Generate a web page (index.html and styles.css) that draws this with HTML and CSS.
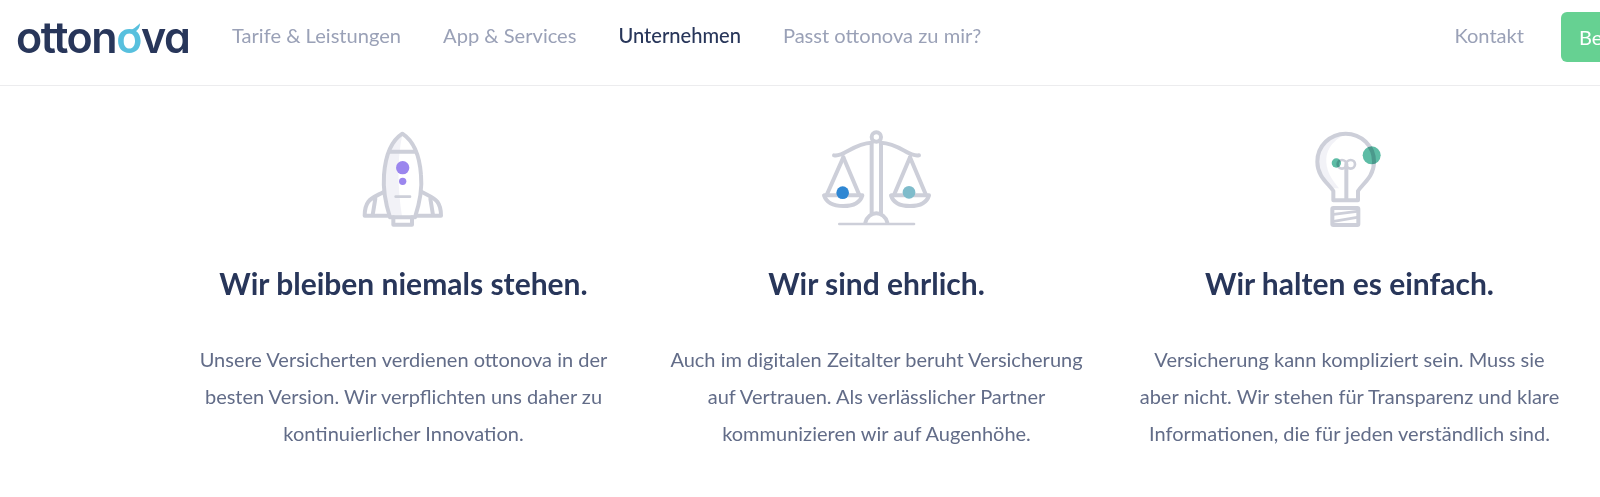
FILE: index.html
```html
<!DOCTYPE html>
<html lang="de">
<head>
  <meta charset="UTF-8">
  <meta name="viewport" content="width=device-width, initial-scale=1.0">
  <title>ottonova</title>
  <link rel="stylesheet" href="styles.css">
</head>
<body>
  <header class="site-header">
    <a href="#" class="logo">otton<span class="logo-o">o<svg class="logo-drop" viewBox="0 0 14 10"><path d="M1 9 C5 8 9 5 13 1 C13 5 11 8 8 10 Z"/></svg></span>va</a>
    <nav class="main-nav">
      <a href="#" class="nav-link">Tarife &amp; Leistungen</a>
      <a href="#" class="nav-link">App &amp; Services</a>
      <a href="#" class="nav-link active">Unternehmen</a>
      <a href="#" class="nav-link">Passt ottonova zu mir?</a>
    </nav>
    <div class="header-actions">
      <a href="#" class="nav-link">Kontakt</a>
      <a href="#" class="btn-join">Beitreten</a>
    </div>
  </header>

  <main class="values">
    <section class="value">
      <svg class="value-icon" viewBox="-3 0 390 345">
        <path class="shade" d="M187 45 C155 66 138 110 134 165 C130 205 138 255 150 288 H186 C172 200 172 110 187 45 Z"/>
        <g class="line">
          <path d="M187 41 C150 65 136 110 132 165 C129 205 138 255 150 292 H225 C237 255 247 205 243 165 C239 110 224 65 187 41 Z"/>
          <path d="M148 95 H227"/>
          <path d="M132 215 C115 225 95 232 85 245 C75 258 74 272 74 287 H148"/>
          <path d="M244 215 C262 225 282 232 292 245 C302 258 303 272 303 287 H228"/>
          <path d="M106 236 L98 285"/>
          <path d="M271 236 L279 285"/>
          <path d="M160 292 V314 H216 V292"/>
          <path class="thin" d="M167 230 H210"/>
        </g>
        <circle class="dot-purple" cx="188" cy="143" r="20"/>
        <circle class="dot-purple" cx="188" cy="184" r="11"/>
      </svg>
      <h2 class="value-title">Wir bleiben niemals stehen.</h2>
      <p class="value-text">Unsere Versicherten verdienen ottonova in der besten Version. Wir verpflichten uns daher zu kontinuierlicher Innovation.</p>
    </section>

    <section class="value">
      <svg class="value-icon" viewBox="6 0 390 345">
        <g class="line">
          <circle cx="199" cy="51" r="14"/>
          <path d="M185 68 V283"/>
          <path d="M213 68 V283"/>
          <path d="M72 106 C100 112 130 70 185 68 M213 68 C268 70 298 112 327 106"/>
          <path d="M100 112 L50 225"/>
          <path d="M100 112 L148 225"/>
          <path d="M300 112 L252 225"/>
          <path d="M300 112 L348 225"/>
          <path d="M42 226 H157 C150 250 125 258 100 258 C75 258 50 250 42 226 Z"/>
          <path d="M243 226 H357 C350 250 325 258 300 258 C275 258 250 250 243 226 Z"/>
          <path d="M166 308 C170 290 185 280 199 280 C213 280 228 290 232 308"/>
          <path class="thin" d="M88 312 H312"/>
        </g>
        <circle class="dot-blue" cx="98" cy="218" r="19"/>
        <circle class="dot-sky" cx="297" cy="217" r="19"/>
      </svg>
      <h2 class="value-title">Wir sind ehrlich.</h2>
      <p class="value-text">Auch im digitalen Zeitalter beruht Versicherung auf Vertrauen. Als verlässlicher Partner kommunizieren wir auf Augenhöhe.</p>
    </section>

    <section class="value">
      <svg class="value-icon" viewBox="-12 0 390 345">
        <path class="shade" d="M165 44 C115 48 88 85 88 125 C88 155 110 180 133 205 H150 C125 175 110 150 112 115 C114 85 135 60 165 44 Z"/>
        <g class="line">
          <path d="M133 241 V213 C118 190 85 170 85 125 C85 78 123 41 170 41 C217 41 255 78 255 125 C255 170 222 190 207 213 V241 Z"/>
          <path d="M172 240 V132"/>
          <circle class="thin" cx="159" cy="133" r="13"/>
          <circle class="thin" cx="185" cy="133" r="13"/>
          <rect x="130" y="264" width="78" height="51" rx="3"/>
          <path class="thin" d="M134 283 L204 274"/>
          <path class="thin" d="M134 304 L204 292"/>
        </g>
        <circle class="dot-teal" cx="248" cy="106" r="27"/>
        <circle class="dot-teal" cx="142" cy="129" r="14"/>
      </svg>
      <h2 class="value-title">Wir halten es einfach.</h2>
      <p class="value-text">Versicherung kann kompliziert sein. Muss sie<br>aber nicht. Wir stehen für Transparenz und klare Informationen, die für jeden verständlich sind.</p>
    </section>
  </main>
</body>
</html>
```

FILE: styles.css
```css
:root {
  --navy: #28365a;
  --nav-grey: #9aa1b7;
  --text-grey: #626c88;
  --icon-grey: #cdcfd9;
  --green: #66d192;
  --sky: #58c0de;
  --border-color: #ececee;
}

html, body {
  overflow: hidden;
}

body {
  font-family: Lato, Arial, sans-serif;
  margin: 0;
  padding: 0;
  color: var(--navy);
  background-color: white;
}

a {
  text-decoration: none;
}

.site-header {
  display: flex;
  align-items: center;
  height: 85px;
  padding-left: 16px;
  border-bottom: 1px solid var(--border-color);
}

.logo {
  font-family: Inter, Arial, sans-serif;
  font-size: 43px;
  font-weight: 600;
  font-feature-settings: "cv11";
  letter-spacing: -1.4px;
  color: var(--navy);
  width: 216px;
  flex-shrink: 0;
  margin-bottom: 12px;
}

.logo-o {
  position: relative;
  color: var(--sky);
}

.logo-drop {
  position: absolute;
  right: 0;
  top: 11px;
  width: 13px;
  height: 10px;
  fill: var(--sky);
}

.main-nav {
  display: flex;
  gap: 42px;
  margin-bottom: 16px;
}

.nav-link {
  font-size: 20.1px;
  color: var(--nav-grey);
  white-space: nowrap;
}

.nav-link.active {
  color: var(--navy);
  font-weight: 500;
}

.header-actions {
  margin-left: auto;
  display: flex;
  align-items: center;
  gap: 37px;
  margin-right: -61px;
  margin-bottom: 12px;
}

.header-actions .nav-link:first-child {
  margin-bottom: 4px;
}

.btn-join {
  display: block;
  width: 82px;
  padding: 14px 0 14px 18px;
  border-radius: 6px;
  background-color: var(--green);
  color: white;
  font-size: 20px;
  line-height: 22px;
  white-space: nowrap;
  overflow: hidden;
}

.values {
  display: grid;
  grid-template-columns: repeat(3, 473px);
  margin-left: 167px;
  padding-top: 34px;
}

.value {
  display: flex;
  flex-direction: column;
  align-items: center;
  text-align: center;
}

.value-icon {
  width: 130px;
  height: 115px;
  display: block;
}

.value-title {
  font-size: 30px;
  font-weight: 700;
  line-height: 36px;
  margin: 30px 0 0;
  color: var(--navy);
}

.value-text {
  font-size: 20px;
  line-height: 37px;
  color: var(--text-grey);
  width: 428px;
  margin: 40px 0 0;
}

.line {
  fill: none;
  stroke: var(--icon-grey);
  stroke-width: 12;
  stroke-linecap: round;
  stroke-linejoin: round;
}

.thin {
  stroke-width: 8;
}

.shade {
  fill: #f2f2f7;
}

.dot-purple {
  fill: #9b86ee;
}

.dot-blue {
  fill: #2f87d3;
}

.dot-sky {
  fill: #7fbccb;
}

.dot-teal {
  fill: #5dbca5;
  mix-blend-mode: multiply;
}
```
